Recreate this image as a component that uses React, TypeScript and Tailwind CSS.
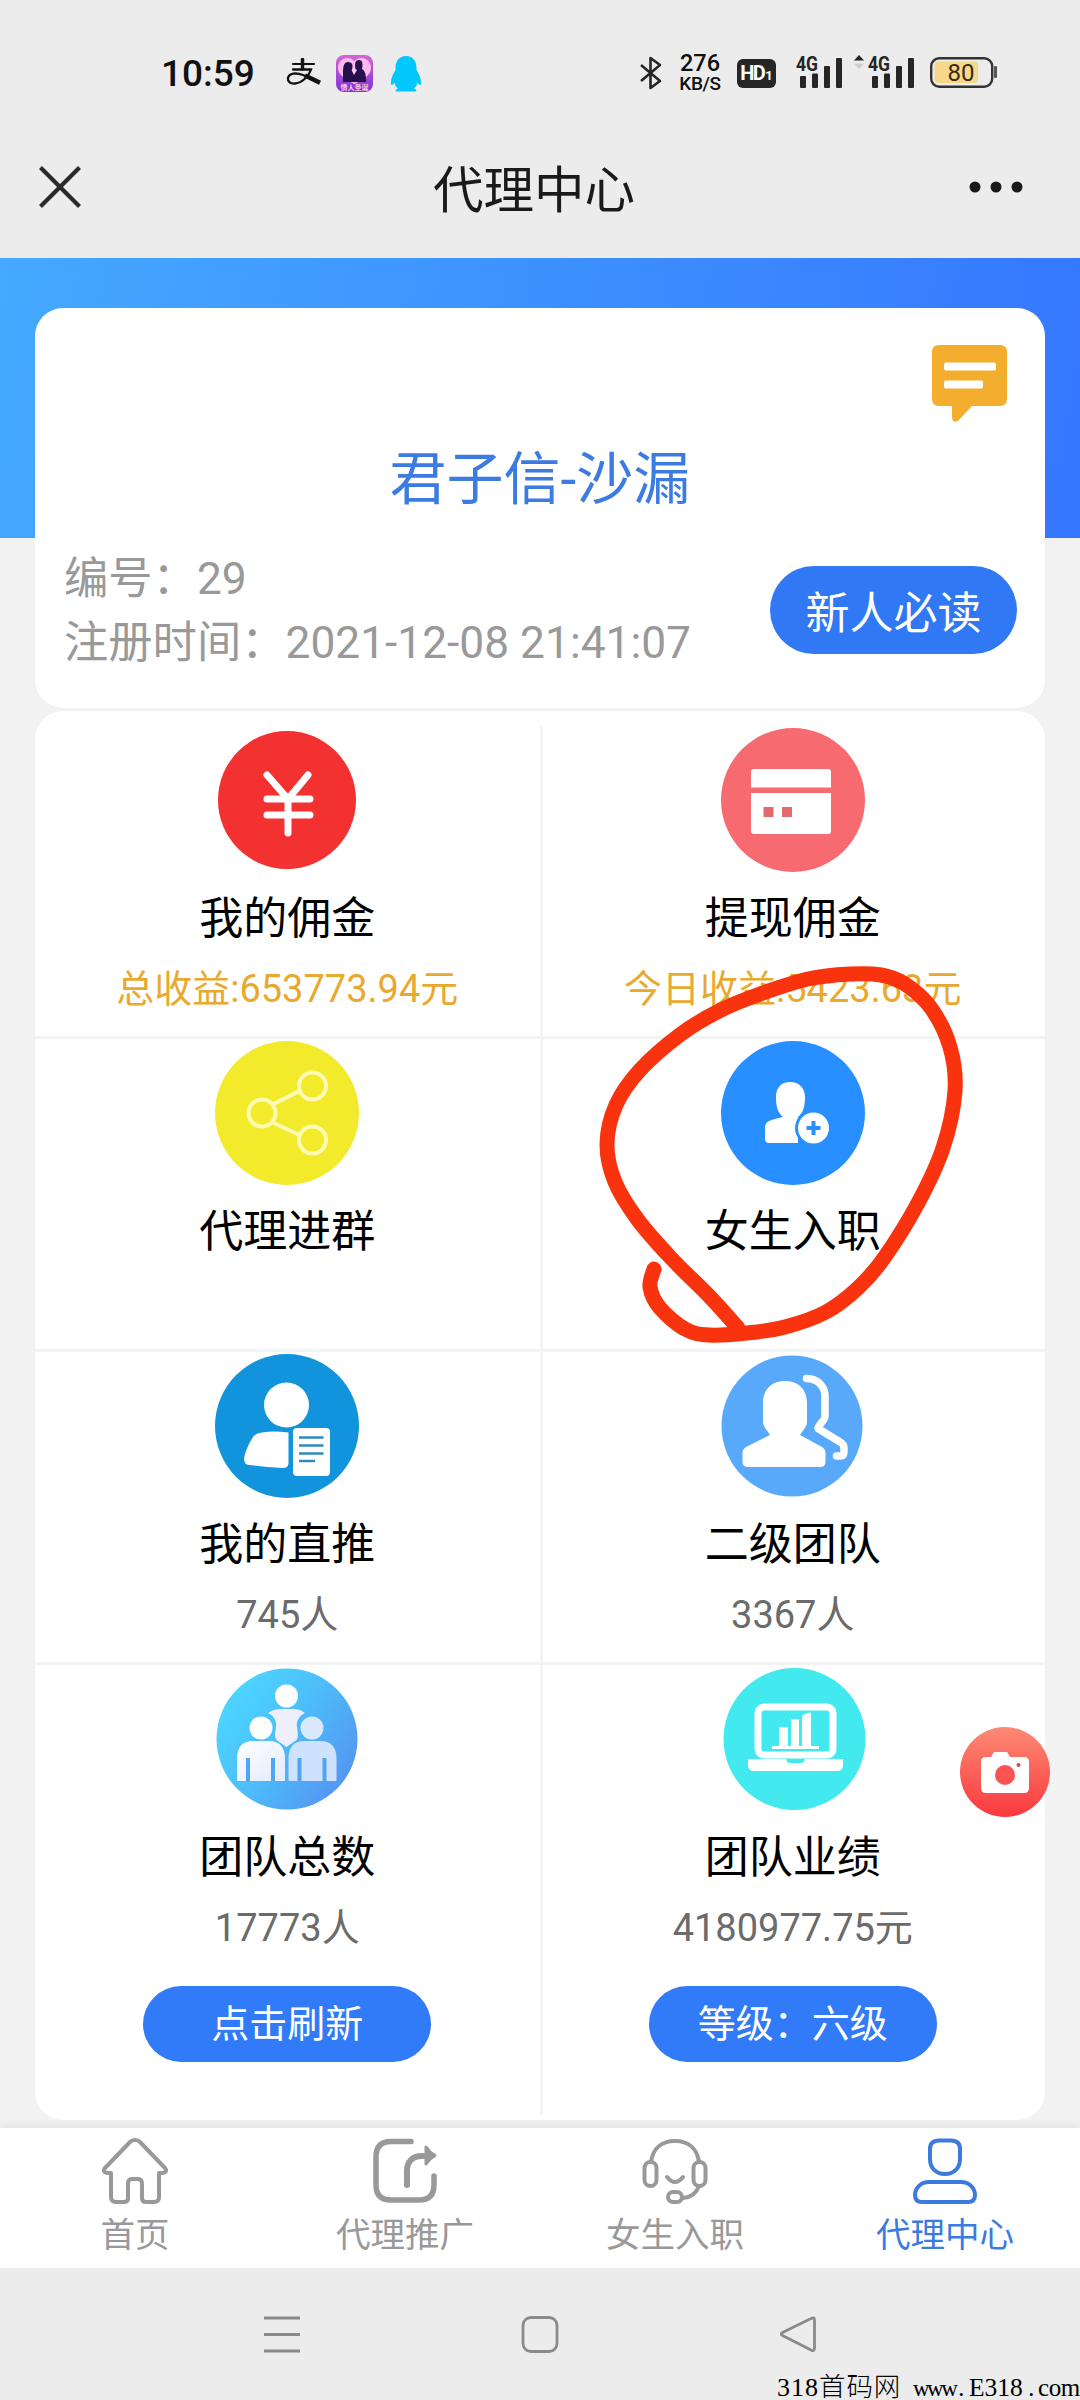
import type { ReactNode } from "react";

// Hand drawn marker around the "女生入职" entry, page coordinates
const MARKER: [number, number][] = [
    [654, 1269], [650, 1287], [660, 1308], [685, 1329], [709, 1335], [747, 1333], [785, 1327], [826, 1312],
    [858, 1288], [884, 1258], [918, 1203], [943, 1148], [955, 1091], [950, 1047], [931, 1008], [905, 984],
    [881, 975], [850, 974], [808, 979], [760, 994], [719, 1011], [681, 1034], [640, 1070], [616, 1105],
    [607, 1144], [615, 1182], [638, 1220], [671, 1258], [711, 1298], [738, 1328],
];

function smoothPath(pts: [number, number][]) {
    let d = `M${pts[0][0]} ${pts[0][1]}`;
    for (let i = 0; i < pts.length - 1; i++) {
        const p0 = pts[i - 1] || pts[i];
        const p1 = pts[i];
        const p2 = pts[i + 1];
        const p3 = pts[i + 2] || p2;
        d += `C${p1[0] + (p2[0] - p0[0]) / 6} ${p1[1] + (p2[1] - p0[1]) / 6} ${p2[0] - (p3[0] - p1[0]) / 6} ${p2[1] - (p3[1] - p1[1]) / 6} ${p2[0]} ${p2[1]}`;
    }
    return d;
}

function Signal() {
    return (
        <svg className="overflow-visible" width="48" height="42" viewBox="0 -3 48 42" fill="#262626">
            <text x="1" y="15.500" fontSize="20" fontWeight="700" textLength="22" lengthAdjust="spacingAndGlyphs">4G</text>
            <rect x="5" y="21" width="6" height="12" rx="1" />
            <rect x="17" y="18.500" width="6" height="14.500" rx="1" />
            <rect x="29" y="11" width="6" height="22" rx="1" />
            <rect x="41" y="3" width="6" height="30" rx="1" />
        </svg>
    );
}

function StatusBar() {
    return (
        <div className="flex h-[146px] items-center pl-[161px] text-[#111]">
            <span className="w-[93px] text-[37px] leading-none font-medium">10:59</span>
            <svg className="ml-[32px]" width="36" height="30" viewBox="0 0 36 30" fill="none" stroke="#111" strokeLinecap="round">
                <path d="M7 6H28" strokeWidth="2.200" />
                <path d="M16.500 1.500V11" strokeWidth="3.500" />
                <path d="M7 11.500H25C23 18 16 25 9 25.500C4 26 1.500 23 2 20C3 15 10 14.500 17 17L33 24" strokeWidth="2.300" />
                <path d="M19 17.500L34 24.800" strokeWidth="4.500" strokeLinecap="butt" />
            </svg>
            <svg className="ml-[14px]" width="37" height="37" viewBox="0 0 37 37">
                <defs>
                    <linearGradient id="love" x1="0" y1="0" x2="0" y2="1">
                        <stop offset="0" stopColor="#d765d8" />
                        <stop offset="1" stopColor="#7b35d6" />
                    </linearGradient>
                </defs>
                <rect width="37" height="37" rx="8" fill="url(#love)" />
                <path d="M18.500 6C13 0 2 3 2 13C2 20 9 24 18.500 29C28 24 35 20 35 13C35 3 24 0 18.500 6Z" fill="#ffb9ea" />
                <path d="M7 27V18C7 11 8 7 12 7C16 7 17.500 10 16 14L18 17L20 15C18 10 19 5 23 5C27 5 27 10 26 14C30 16 30 22 30 27Z" fill="#24104d" />
                <path d="M15.500 15L18 13.500L21 15L18 20Z" fill="#ffc9f0" />
                <text x="18.500" y="34.500" fontSize="7" fontWeight="700" textAnchor="middle" fill="#ffc6dc">情人圣诞</text>
            </svg>
            <svg className="ml-[17px]" width="32" height="37" viewBox="0 0 32 37" fill="#00c8fa">
                <path d="M16 1C9 1 5.500 6 5.500 13V15C3 19 .5 24 1 29C1.500 31 3 29.500 4.500 27.500C5 30 6 32 8 33.500C5 34.500 5 36.500 7 36.500H25C27 36.500 27 34.500 24 33.500C26 32 27 30 27.500 27.500C29 29.500 30.500 31 31 29C31.500 24 29 19 26.500 15V13C26.500 6 23 1 16 1Z" />
            </svg>

            <svg className="ml-[217px]" width="24" height="36" viewBox="0 0 24 36" fill="none" stroke="#262626" strokeWidth="2.600" strokeLinejoin="round">
                <path d="M2 10L21 26L11.500 33V3L21 10L2 26" />
            </svg>
            <div className="ml-[16px] flex w-[42px] flex-col items-center font-medium text-[#111]">
                <span className="text-[23.500px] leading-[19px]">276</span>
                <span className="mt-[2px] text-[19px] leading-[17px] tracking-[-0.4px]">KB/S</span>
            </div>
            <div className="ml-[16px] flex h-[29px] w-[39px] items-baseline justify-center rounded-[6px] bg-[#262626] text-white">
                <span className="text-[20px] leading-[29px] font-bold tracking-[-1.500px]">HD</span>
                <span className="ml-px text-[13px] font-bold">1</span>
            </div>
            <div className="ml-[19px] flex">
                <Signal />
            </div>
            <svg className="mb-[22px] ml-[11px]" width="10" height="14" viewBox="0 0 10 14">
                <path d="M0 5.500L5 0L10 5.500Z" fill="#262626" />
                <path d="M0 8.500L5 14L10 8.500Z" fill="#cfcfcf" />
            </svg>
            <div className="ml-[3px] flex">
                <Signal />
            </div>
            <svg className="ml-[14px]" width="69" height="32" viewBox="0 0 69 32">
                <rect x="2.200" y="1.200" width="61" height="28.500" rx="8" fill="none" stroke="#333" strokeWidth="2.400" />
                <rect x="5.500" y="4.500" width="43.500" height="21.500" rx="4" fill="#f7d888" />
                <rect x="65" y="9" width="3" height="12" rx="1" fill="#555" />
                <text x="32" y="23.800" fontSize="24" textAnchor="middle" fill="#3b2a16">80</text>
            </svg>
        </div>
    );
}

function TitleBar() {
    return (
        <div className="flex h-[112px] items-start justify-between pr-[54px] pl-[38px]">
            <svg className="mt-[19px]" width="44" height="44" viewBox="0 0 44 44" stroke="#2b2b2b" strokeWidth="4.200">
                <path d="M2.500 2.500L41.500 41.500M41.500 2.500L2.500 41.500" />
            </svg>
            <h1 className="mt-[3px] ml-[18px] text-[50.500px] leading-[84px] text-[#1a1a1a]">代理中心</h1>
            <svg className="mt-[34px]" width="58" height="14" viewBox="0 0 58 14" fill="#1a1a1a">
                <circle cx="7" cy="7" r="5.500" />
                <circle cx="28" cy="7" r="5.500" />
                <circle cx="49" cy="7" r="5.500" />
            </svg>
        </div>
    );
}

function ProfileCard() {
    return (
        <section className="flex h-[400px] flex-col rounded-[28px] bg-white px-[28px] pt-[36px]">
            <div className="flex justify-end pr-[9px]">
                <svg width="77" height="79" viewBox="0 0 77 79">
                    <path d="M8 1H69Q76 1 76 8V55Q76 62 69 62H41L27 77Q21 80 21 72V62H8Q1 62 1 55V8Q1 1 8 1Z" fill="#f4ae2d" />
                    <rect x="13" y="18.500" width="52" height="8" rx="2" fill="#fff" />
                    <rect x="13" y="36.500" width="39" height="8" rx="2" fill="#fff" />
                </svg>
            </div>
            <h2 className="mt-[17px] text-center text-[57px] leading-[80px] text-[#3b7be2]">君子信-沙漏</h2>
            <div className="mt-[27px] flex justify-between">
                <div className="pl-px text-[44.300px] leading-[64px] whitespace-nowrap text-[#999]">
                    <p>编号：29</p>
                    <p>注册时间：2021-12-08 21:41:07</p>
                </div>
                <button className="mt-[19px] h-[88px] w-[247px] rounded-full bg-[#3078f4] pt-[8px] text-[44px] text-white">新人必读</button>
            </div>
        </section>
    );
}

function Disc({ fill, r = 72, cx = 72, children }: { fill: string; r?: number; cx?: number; children: ReactNode }) {
    return (
        <svg className="shrink-0 overflow-visible" width="144" height="144" viewBox="0 0 144 144">
            <circle cx={cx} cy="72" r={r} fill={fill} />
            {children}
        </svg>
    );
}

const yenIcon = (
    <Disc fill="#f33131" r={69}>
        <path d="M52 47L73 71L93 47M52 71H95M52 87H95M73 71V105" fill="none" stroke="#fff" strokeWidth="7" strokeLinecap="round" strokeLinejoin="round" />
    </Disc>
);

const bankCardIcon = (
    <Disc fill="#f66a70">
        <path d="M33 41H107Q110 41 110 44V59.500H30V44Q30 41 33 41Z" fill="#fff" />
        <path d="M30 65H110V103Q110 106 107 106H33Q30 106 30 103Z" fill="#fff" />
        <path d="M42.500 79H52.500V89H42.500ZM61 79H71V89H61Z" fill="#e26a6c" />
    </Disc>
);

const shareIcon = (
    <Disc fill="#f3ea2c">
        <g fill="none" stroke="#fffbb4" strokeWidth="4">
            <circle cx="47" cy="72" r="13.500" />
            <circle cx="97.500" cy="45" r="13.500" />
            <circle cx="97.500" cy="99" r="13.500" />
            <path d="M58.500 63L84.500 50M58.500 82L84.500 94" />
        </g>
    </Disc>
);

const addUserIcon = (
    <Disc fill="#278fff">
        <path d="M69 41C60 41 55 47 55 56C55 66 57 72 62 76C54 78 44 79 44 86V98Q44 102 48 102H77V76C82 72 84 66 84 56C84 47 78 41 69 41Z" fill="#fff" />
        <circle cx="92.500" cy="87" r="18.500" fill="#278fff" />
        <circle cx="92.500" cy="87" r="15.500" fill="#fff" />
        <path d="M92.500 80V94M85.500 87H99.500" stroke="#278fff" strokeWidth="4" />
    </Disc>
);

const userDocIcon = (
    <Disc fill="#1194dc">
        <circle cx="71.500" cy="51" r="22.500" fill="#fff" />
        <path d="M73.500 78.500V109Q73.500 114 68 114C55 113.500 45 112 34 111Q29 110.500 29 105C30 98 34 89 38 83Q41 79 47 78.500C56 77 65 77.500 73.500 78.500Z" fill="#fff" />
        <rect x="78" y="74" width="37" height="48" rx="4" fill="#fff" />
        <path d="M84 83.500H108.500M84 91.500H108.500M84 99.500H108.500M84 107H100" stroke="#2f89bd" strokeWidth="2.600" />
    </Disc>
);

const twoUsersIcon = (
    <Disc fill="#59a9fa" r={70.5} cx={71}>
        <path d="M64 27C50 27 42 36 42 49V68C42 73 47 77 49 81L25 93Q21.500 95 21.500 99V108Q21.500 113 27 113H99Q104.500 113 104.500 108V99Q104.500 95 101 93L79 81C81 77 86 73 86 68V49C86 36 78 27 64 27Z" fill="#fff" />
        <path d="M85.500 24.500C98 24.500 104 34 104 42V63C104 66 97 71 97 74.500L119 88Q123 90 123 94V98Q123 102 119 102H115.500" fill="none" stroke="#fff" strokeWidth="7.500" strokeLinecap="round" strokeLinejoin="round" />
    </Disc>
);

const teamIcon = (
    <Disc fill="url(#team)" r={70.5}>
        <defs>
            <linearGradient id="team" x1="0.1" y1="0.25" x2="0.9" y2="0.8">
                <stop offset="0" stopColor="#4dd3ff" />
                <stop offset="0.45" stopColor="#4cbefa" />
                <stop offset="1" stopColor="#5497f2" />
            </linearGradient>
            <linearGradient id="body" x1="0" y1="0" x2="1" y2="1">
                <stop offset="0" stopColor="#fff" />
                <stop offset="1" stopColor="#e2eafb" />
            </linearGradient>
        </defs>
        <circle cx="71.500" cy="29" r="11.500" fill="#fff" />
        <path d="M53 46Q59 42 65 42H79Q85 42 90 46C84 49 81 54 82 60C83 68 84 72 80 74L71.500 80L63 74C59 72 60 66 61 60C62 54 59 49 53 46Z" fill="#edf0fb" />
        <circle cx="46" cy="61" r="11.500" fill="#fff" />
        <circle cx="97" cy="61" r="11.500" fill="#d9e8fd" />
        <path d="M22 114V92Q22 74 38 74H54Q70 74 70 92V114Z" fill="url(#body)" />
        <path d="M73.500 114V92Q73.500 74 89.500 74H105.500Q121.500 74 121.500 92V114Z" fill="#cfe2fd" />
        <path d="M33 91V114M58 91V114M84.500 91V114M109.500 91V114" stroke="#51a6f3" strokeWidth="4" />
    </Disc>
);

const laptopIcon = (
    <Disc fill="#42eaf0" r={71} cx={73.5}>
        <rect x="37" y="40" width="75" height="48" rx="6" fill="none" stroke="#fff" strokeWidth="7" />
        <path d="M27 92H65Q66 96 69 96H80Q83 96 84 92H122V98Q122 104 116 104H33Q27 104 27 98Z" fill="#fff" />
        <path d="M58 60H67V80H58ZM70 52H78V80H70ZM81 49Q84 46 90 45.500V80H81Z" fill="#fff" />
        <path d="M51 80.500H98" stroke="#fff" strokeWidth="3" />
    </Disc>
);

type Entry = { title: string; icon: ReactNode; sub?: string; gold?: boolean; button?: string };

const rows: [Entry, Entry][] = [
    [
        { title: "我的佣金", icon: yenIcon, sub: "总收益:653773.94元", gold: true },
        { title: "提现佣金", icon: bankCardIcon, sub: "今日收益:5423.63元", gold: true },
    ],
    [
        { title: "代理进群", icon: shareIcon },
        { title: "女生入职", icon: addUserIcon },
    ],
    [
        { title: "我的直推", icon: userDocIcon, sub: "745人" },
        { title: "二级团队", icon: twoUsersIcon, sub: "3367人" },
    ],
    [
        { title: "团队总数", icon: teamIcon, sub: "17773人", button: "点击刷新" },
        { title: "团队业绩", icon: laptopIcon, sub: "4180977.75元", button: "等级：六级" },
    ],
];

function Cell({ entry }: { entry: Entry }) {
    return (
        <div className="flex flex-1 flex-col items-center pt-[2px]">
            {entry.icon}
            <p className="mt-[17px] text-[44px] leading-[60px] text-black">{entry.title}</p>
            {entry.sub && (
                <p className={`mt-[10px] text-[38px] leading-[60px] ${entry.gold ? "text-[#e8a92f]" : "text-[#6b6b6b]"}`}>{entry.sub}</p>
            )}
            {entry.button && (
                <button className="mt-[28px] h-[76px] w-[288px] rounded-full bg-[#327bf8] text-[38px] text-white">{entry.button}</button>
            )}
        </div>
    );
}

function TabBar() {
    const tabs = [
        {
            label: "首页",
            icon: <path d="M33 3Q36 3 38 5L63 31Q66 35 61 36H57V60Q57 65 52 65H44Q40 65 40 61V47Q40 42 36 42H30Q26 42 26 47V61Q26 65 22 65H14Q9 65 9 60V36H5Q0 35 3 31L28 5Q30 3 33 3Z" />,
        },
        {
            label: "代理推广",
            icon: (
                <g strokeWidth="5.500">
                    <path d="M39 4.500H19Q4 4.500 4 20V48Q4 63 19 63H47Q62 63 62 48V39" />
                    <path d="M35 48V34C35 25 40 19 50 19H54" strokeWidth="6" />
                    <path d="M54 10Q57 15 63 18.500Q57 22 54 27Z" fill="currentColor" strokeWidth="3" />
                </g>
            ),
        },
        {
            label: "女生入职",
            icon: (
                <>
                    <path d="M9 25C11 11 20 4 33 4S55 11 57 25" />
                    <rect x="2.500" y="25" width="12" height="24" rx="6" />
                    <rect x="51.500" y="25" width="12" height="24" rx="6" />
                    <path d="M25 40Q33 50 41 40M57 49Q53 60 41 61" />
                    <rect x="26" y="55" width="14" height="10" rx="5" />
                </>
            ),
        },
        {
            label: "代理中心",
            active: true,
            icon: (
                <>
                    <path d="M27 3.500H39Q48 3.500 48 12V22C48 31 42 37 33 37S18 31 18 22V12Q18 3.500 27 3.500Z" />
                    <path d="M17 45H49C57 45 63 51 63 58Q63 65 56 65H10Q3 65 3 58C3 51 9 45 17 45Z" />
                </>
            ),
        },
    ];
    return (
        <nav className="flex h-[140px] bg-white shadow-[0_-3px_8px_rgba(0,0,0,0.06)]">
            {tabs.map((tab) => (
                <div key={tab.label} className={`flex flex-1 flex-col items-center pt-[9px] ${tab.active ? "text-[#3b7be0]" : "text-[#999]"}`}>
                    <svg width="66" height="68" viewBox="0 0 66 68" fill="none" stroke="currentColor" strokeWidth="4" strokeLinecap="round" strokeLinejoin="round">
                        {tab.icon}
                    </svg>
                    <span className="mt-[8px] text-[34.500px] leading-[44px]">{tab.label}</span>
                </div>
            ))}
        </nav>
    );
}

function SystemBar() {
    return (
        <footer className="h-[132px] bg-[#ececec]">
            <div className="flex justify-between px-[263px] pt-[46px]">
                <svg width="38" height="40" viewBox="0 0 38 40" stroke="#8a8a8a" strokeWidth="3">
                    <path d="M1 4H37M1 20.500H37M1 37H37" />
                </svg>
                <svg width="38" height="40" viewBox="0 0 38 40" fill="none" stroke="#8a8a8a" strokeWidth="2.800">
                    <rect x="2" y="3.500" width="34" height="34" rx="8" />
                </svg>
                <svg width="38" height="40" viewBox="0 0 38 40" fill="none" stroke="#8a8a8a" strokeWidth="2.800" strokeLinejoin="round">
                    <path d="M32 4.500Q35.500 2.500 35.500 6V34Q35.500 38 32 36L3.500 21.500Q1 20 3.500 18.500Z" />
                </svg>
            </div>
            <p className="mt-[17px] flex items-baseline justify-end font-['Liberation_Serif','Noto_Sans_CJK_SC',serif] text-[26px] leading-[32px] whitespace-pre text-black">
                <span className="tracking-[1px]">318</span>
                <span className="mr-[12px] text-[26.500px] font-light tracking-[0.8px]">首码网</span>
                <span className="w-[43px] text-[23px] tracking-[-2.500px]">www</span>
                <span className="w-[13px] pl-[2px]">.</span>
                <span className="w-[57px] text-[25.500px]">E318</span>
                <span className="w-[12px] pl-[2px]">.</span>
                <span className="w-[42px] text-[25px] tracking-[-0.4px]">com</span>
            </p>
        </footer>
    );
}

export default function App() {
    return (
        <div className="relative h-[2400px] w-[1080px] overflow-hidden bg-[#ececec] font-[Roboto,'Noto_Sans_CJK_SC',sans-serif]">
            <StatusBar />
            <TitleBar />
            <main className="h-[1870px] bg-[#f2f2f2] bg-[linear-gradient(100deg,#45a9ff,#3577ff)] bg-[length:100%_280px] bg-no-repeat px-[35px] pt-[50px]">
                <ProfileCard />
                <section className="mt-[3px] h-[1409px] rounded-[28px] bg-white pt-[15px]">
                    {rows.map((row, i) => (
                        <div key={row[0].title} className={`flex ${i < 3 ? "h-[313px] border-b-[3px] border-[#f3f3f3]" : "h-[450px]"}`}>
                            <Cell entry={row[0]} />
                            <div className="-mr-[2px] w-[3px] bg-[#f4f4f4]" />
                            <Cell entry={row[1]} />
                        </div>
                    ))}
                </section>
            </main>
            <TabBar />
            <SystemBar />

            <svg className="absolute top-[1727px] left-[960px]" width="90" height="90" viewBox="0 0 90 90">
                <defs>
                    <linearGradient id="cam" x1="0" y1="0" x2="0" y2="1">
                        <stop offset="0" stopColor="#fc8a74" />
                        <stop offset="1" stopColor="#fa383e" />
                    </linearGradient>
                </defs>
                <circle cx="45" cy="45" r="45" fill="url(#cam)" />
                <path d="M26 30H31L34 25H47L50 30H64Q69 30 69 35V61Q69 66 64 66H26Q21 66 21 61V35Q21 30 26 30Z" fill="#fff" />
                <circle cx="45" cy="48" r="10" fill="#fa5353" />
                <circle cx="58.500" cy="38" r="2" fill="#c0504c" />
            </svg>
            <svg className="pointer-events-none absolute top-0 left-0" width="1080" height="2400" viewBox="0 0 1080 2400">
                <path d={smoothPath(MARKER)} fill="none" stroke="#f8330e" strokeWidth="15" strokeLinecap="round" strokeLinejoin="round" />
            </svg>
        </div>
    );
}
